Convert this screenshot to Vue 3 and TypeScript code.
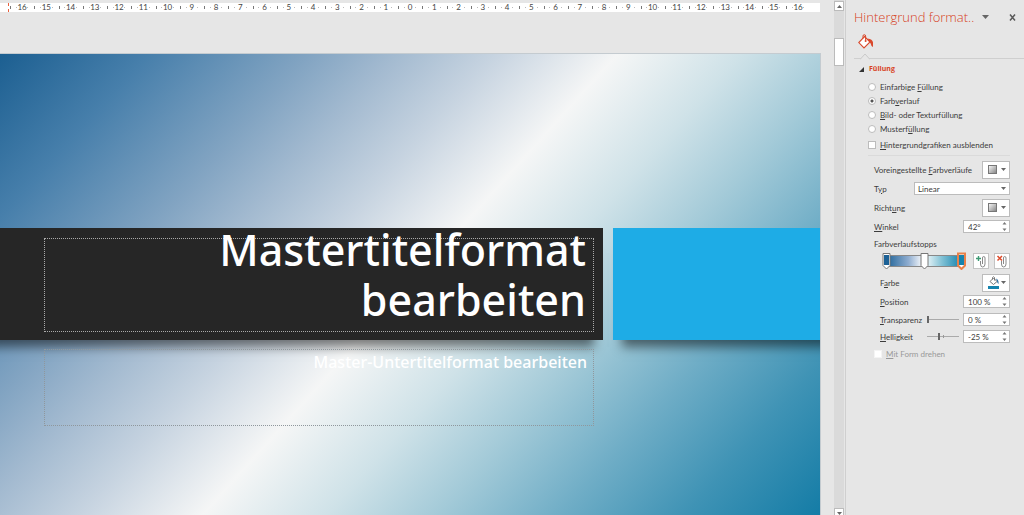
<script setup lang="ts">
import { ref } from 'vue'

interface FillOption {
  id: string
  before: string
  key: string
  after: string
}

interface GradientStop {
  position: number
  color: string
}

const rulerMarks: number[] = Array.from({ length: 33 }, (_, i) => Math.abs(i - 16))

const fillOptions: FillOption[] = [
  { id: 'solid', before: 'Einfarbige ', key: 'F', after: 'üllung' },
  { id: 'gradient', before: 'Farb', key: 'v', after: 'erlauf' },
  { id: 'picture', before: '', key: 'B', after: 'ild- oder Texturfüllung' },
  { id: 'pattern', before: 'Musterf', key: 'ü', after: 'llung' },
]

const stops: GradientStop[] = [
  { position: 0, color: '#1c6196' },
  { position: 50, color: '#ffffff' },
  { position: 100, color: '#1583ae' },
]

const fill = ref('gradient')
const activeStop = ref(2)
const hideGraphics = ref(false)
const angle = ref('42°')
const position = ref('100 %')
const transparency = ref(0)
const brightness = ref(-25)
</script>

<template>
  <div class="app">
    <main class="work">
      <div class="ruler">
        <span v-for="(mark, i) in rulerMarks" :key="i" class="mark">{{ mark }}</span>
        <i class="cursor"></i>
      </div>

      <section class="slide">
        <div class="band">
          <div class="title-block">
            <h1 class="title">Mastertitelformat bearbeiten</h1>
          </div>
          <div class="accent-block"></div>
        </div>
        <div class="band">
          <p class="subtitle">Master-Untertitelformat bearbeiten</p>
          <div class="spacer"></div>
        </div>
      </section>
    </main>

    <div class="scrollbar">
      <button class="scroll-btn" aria-label="Nach oben">
        <svg width="5" height="3" viewBox="0 0 5 3"><path d="M0 3 2.500 0 5 3Z" fill="#666" /></svg>
      </button>
      <div class="thumb"></div>
      <button class="scroll-btn" aria-label="Nach unten">
        <svg width="5" height="3" viewBox="0 0 5 3"><path d="M0 0H5L2.500 3Z" fill="#666" /></svg>
      </button>
    </div>

    <aside class="panel">
      <header class="head">
        <h2>Hintergrund format..</h2>
        <button class="plain" aria-label="Optionen">
          <svg width="7" height="4" viewBox="0 0 7 4"><path d="M0 0H7L3.500 4Z" fill="#666" /></svg>
        </button>
        <button class="plain close" aria-label="Schließen">
          <svg width="7" height="7" viewBox="0 0 7 7"><path d="M1 0.500 6 6.500M6 0.500 1 6.500" stroke="#5a5a5a" stroke-width="1.500" /></svg>
        </button>
      </header>

      <div class="tabs">
        <button class="plain" aria-label="Füllung">
          <svg width="16" height="16" viewBox="0 0 16 16">
            <path d="M6.500 2.500 12 8 6 14 0.800 8.600Z" fill="#fff" stroke="#d9482b" stroke-width="1.100" />
            <path d="M5 4.500V2Q5 0.700 6.300 0.700T7.600 2V6.500" fill="none" stroke="#d9482b" />
            <circle cx="7.600" cy="7" r="1" fill="#d9482b" />
            <path d="M9.500 4.500Q14.500 5 15 8.500V13Q13 12 12.600 9.500Z" fill="#d9482b" />
          </svg>
        </button>
      </div>
      <div class="tab-line">
        <svg width="10" height="7" viewBox="0 0 10 7"><path d="M0 6.500 5 1 10 6.500" fill="#e6e6e6" stroke="#c9c9c9" /></svg>
      </div>

      <h3 class="section">
        <svg width="5" height="5" viewBox="0 0 5 5"><path d="M5 0V5H0Z" fill="#333" /></svg>
        Füllung
      </h3>

      <label v-for="option in fillOptions" :key="option.id" class="choice">
        <input v-model="fill" type="radio" name="fill" :value="option.id" />
        <span>{{ option.before }}<u>{{ option.key }}</u>{{ option.after }}</span>
      </label>
      <label class="choice tall">
        <input v-model="hideGraphics" type="checkbox" />
        <span><u>H</u>intergrundgrafiken ausblenden</span>
      </label>

      <div class="props">
        <div class="row">
          <span>Voreingestellte <u>F</u>arbverläufe</span>
          <button class="picker" aria-label="Voreingestellte Farbverläufe">
            <i class="swatch"></i>
            <svg width="5" height="3" viewBox="0 0 5 3"><path d="M0 0H5L2.500 3Z" fill="#666" /></svg>
          </button>
        </div>
        <div class="row">
          <label for="type">T<u>y</u>p</label>
          <div class="select">
            <select id="type"><option>Linear</option></select>
            <svg width="5" height="3" viewBox="0 0 5 3"><path d="M0 0H5L2.500 3Z" fill="#666" /></svg>
          </div>
        </div>
        <div class="row">
          <span>Richt<u>u</u>ng</span>
          <button class="picker" aria-label="Richtung">
            <i class="swatch"></i>
            <svg width="5" height="3" viewBox="0 0 5 3"><path d="M0 0H5L2.500 3Z" fill="#666" /></svg>
          </button>
        </div>
        <div class="row">
          <label for="angle"><u>W</u>inkel</label>
          <div class="spin">
            <input id="angle" v-model="angle" type="text" />
            <svg width="5" height="9" viewBox="0 0 5 9"><path d="M0.500 2.500 2.500 0 4.500 2.500ZM0.500 6.500H4.500L2.500 9Z" fill="#777" /></svg>
          </div>
        </div>

        <div class="caption">Farbverlaufstopps</div>
        <div class="stops-row">
          <div class="stops">
            <button
              v-for="(stop, i) in stops"
              :key="i"
              class="stop"
              :style="{ left: stop.position + '%' }"
              :aria-label="'Stopp ' + (i + 1)"
              @click="activeStop = i"
            >
              <svg width="11" height="18" viewBox="0 0 11 18">
                <path
                  d="M2 1.500H9V13.500L5.500 17 2 13.500Z"
                  fill="#fff"
                  :stroke="activeStop === i ? '#e8814a' : '#777'"
                  :stroke-width="activeStop === i ? 2 : 1"
                />
                <path d="M3 3H8V13H3Z" :fill="stop.color" />
              </svg>
            </button>
          </div>
          <button class="tool" aria-label="Stopp hinzufügen">
            <svg width="13" height="13" viewBox="0 0 13 13">
              <path d="M5.500 6V9Q5.500 12 7.700 12T10 9V3Q10 1.500 8.700 1.500T7.500 3V9" fill="none" stroke="#8a8a8a" />
              <path d="M1 3.500H6M3.500 1V6" stroke="#3d9b74" stroke-width="1.400" />
            </svg>
          </button>
          <button class="tool" aria-label="Stopp entfernen">
            <svg width="13" height="13" viewBox="0 0 13 13">
              <path d="M5.500 6V9Q5.500 12 7.700 12T10 9V3Q10 1.500 8.700 1.500T7.500 3V9" fill="none" stroke="#8a8a8a" />
              <path d="M1.500 1 6 5.500M6 1 1.500 5.500" stroke="#dd4b2c" stroke-width="1.500" />
            </svg>
          </button>
        </div>

        <div class="row sub">
          <span>F<u>a</u>rbe</span>
          <button class="picker" aria-label="Farbe">
            <svg width="12" height="13" viewBox="0 0 12 13">
              <path d="M5.500 2 9 5.500 5.500 8.500 2 5.500Z" fill="#fff" stroke="#777" />
              <path d="M4.500 3.500V1.500Q5.500 0 6.500 1.500V4.500" fill="none" stroke="#777" />
              <path d="M8 2.500Q11 3.500 10.500 8 9 7 9 5Z" fill="#2b6ea5" />
              <rect y="10" width="11" height="3" fill="#1583ae" />
            </svg>
            <svg width="5" height="3" viewBox="0 0 5 3"><path d="M0 0H5L2.500 3Z" fill="#666" /></svg>
          </button>
        </div>
        <div class="row sub">
          <label for="position"><u>P</u>osition</label>
          <div class="spin">
            <input id="position" v-model="position" type="text" />
            <svg width="5" height="9" viewBox="0 0 5 9"><path d="M0.500 2.500 2.500 0 4.500 2.500ZM0.500 6.500H4.500L2.500 9Z" fill="#777" /></svg>
          </div>
        </div>
        <div class="row sub short">
          <label for="transparency"><u>T</u>ransparenz</label>
          <input v-model.number="transparency" class="slider" type="range" min="0" max="100" aria-label="Transparenz" />
          <div class="spin">
            <input id="transparency" type="text" :value="transparency + ' %'" />
            <svg width="5" height="9" viewBox="0 0 5 9"><path d="M0.500 2.500 2.500 0 4.500 2.500ZM0.500 6.500H4.500L2.500 9Z" fill="#777" /></svg>
          </div>
        </div>
        <div class="row sub short">
          <label for="brightness"><u>H</u>elligkeit</label>
          <input v-model.number="brightness" class="slider centered" type="range" min="-100" max="100" aria-label="Helligkeit" />
          <div class="spin">
            <input id="brightness" type="text" :value="brightness + ' %'" />
            <svg width="5" height="9" viewBox="0 0 5 9"><path d="M0.500 2.500 2.500 0 4.500 2.500ZM0.500 6.500H4.500L2.500 9Z" fill="#777" /></svg>
          </div>
        </div>
        <label class="choice disabled">
          <input type="checkbox" disabled />
          <span><u>M</u>it Form drehen</span>
        </label>
      </div>
    </aside>
  </div>
</template>

<style>
body {
  margin: 0;
  background: #e6e6e6;
}
</style>

<style scoped>
* {
  box-sizing: border-box;
}
.app {
  display: flex;
  height: 100vh;
  overflow: hidden;
  background: #e6e6e6;
  color: #3c3c3c;
  font: 8px/12px Lato, 'Open Sans', sans-serif;
}
button,
input,
select {
  font: inherit;
  color: inherit;
  margin: 0;
  padding: 0;
}
svg {
  display: block;
  flex: none;
}
.work {
  flex: 1;
  min-width: 0;
  display: flex;
  flex-direction: column;
  padding: 3px 13px 0 0;
}
.ruler {
  position: relative;
  display: flex;
  height: 9px;
  margin: 0 1px 41px 0;
  padding: 0 10px;
  background: #fff;
  color: #444;
  font: 8px/9px Lato, 'Open Sans', sans-serif;
}
.mark {
  flex: 1;
  text-align: center;
  background:
    linear-gradient(#777, #777) 0 3px / 1px 3px no-repeat,
    linear-gradient(#bbb, #bbb) 25% 4px / 1px 1px no-repeat,
    linear-gradient(#bbb, #bbb) 75% 4px / 1px 1px no-repeat;
}
.cursor {
  position: absolute;
  left: 8px;
  top: 0;
  height: 9px;
  border-left: 1px dashed #e8603c;
}
.slide {
  flex: 1;
  overflow: hidden;
  padding-top: 174px;
  border: solid #c4cbd0;
  border-width: 1px 1px 0 0;
  background: linear-gradient(132deg, #1c5f91 0%, #477fab 12%, #82a4c2 25%, #a3bad0 32%, #c6d3e0 40%, #f5f6f6 50%, #cfe2e8 60%, #a3cad8 69%, #6fadc6 79%, #3f93b5 89%, #147ca6 100%);
  color: #fff;
  font-family: 'Noto Sans', 'Open Sans', sans-serif;
}
.band {
  display: grid;
  grid-template-columns: 603fr 207fr;
  gap: 10px;
}
.title-block {
  height: 112px;
  margin-left: -20px;
  padding: 10px 9px 8px 64px;
  background: #262626;
  box-shadow: 0 16px 10px -9px rgba(0, 0, 0, 0.5);
}
.accent-block {
  margin-right: -20px;
  background: #1eace6;
  box-shadow: 0 16px 10px -9px rgba(0, 0, 0, 0.5);
}
.title {
  display: flex;
  align-items: flex-end;
  height: 94px;
  margin: 0;
  padding: 0 7px 6px 120px;
  border: 1px dotted #aaa;
  font-size: 43px;
  font-weight: 500;
  line-height: 50px;
  text-align: right;
}
.subtitle {
  height: 77px;
  margin: 9px 9px 0 44px;
  padding: 1px 6px 0;
  border: 1px dotted #8f979c;
  font-size: 16px;
  font-weight: 500;
  line-height: 22px;
  text-align: right;
}
.scrollbar {
  flex: none;
  display: flex;
  flex-direction: column;
  width: 11px;
  height: 518px;
  padding-top: 1px;
  background: #dadada;
  border-right: 1px solid #e6e6e6;
}
.scroll-btn {
  display: grid;
  place-items: center;
  height: 10px;
  background: #fff;
  border: 1px solid #bbb;
}
.scroll-btn:last-child {
  margin-top: auto;
}
.thumb {
  height: 28px;
  margin-top: 27px;
  background: #fff;
  border: 1px solid #bbb;
}
.panel {
  flex: none;
  width: 179px;
  padding: 0 14px 0 22px;
  border-left: 1px solid #cfcfcf;
}
.plain {
  border: 0;
  background: none;
}
.head {
  display: flex;
  align-items: center;
  height: 34px;
  margin: 0 -10px 0 -14px;
}
.head .plain {
  height: 10px;
}
.head h2 {
  margin: 0;
  color: #d63f1c;
  font: 300 13px/18px 'Open Sans', sans-serif;
  white-space: nowrap;
  flex: 1;
}
.head .close {
  margin: 0 4px 0 20px;
}
.tabs {
  display: flex;
  height: 19px;
  margin-left: -10px;
}
.tabs .plain {
  height: 14px;
}
.tab-line {
  height: 6px;
  margin: 0 -14px;
  padding-left: 6px;
  border-bottom: 1px solid #cfcfcf;
}
.section {
  display: flex;
  align-items: center;
  gap: 5px;
  height: 20px;
  margin: 0 0 1px -9px;
  color: #d8431f;
  font: 700 7px/12px 'Open Sans', sans-serif;
}
.choice {
  display: flex;
  align-items: center;
  gap: 4px;
  height: 14px;
  white-space: nowrap;
}
.choice.tall {
  height: 18px;
}
.choice input {
  appearance: none;
  flex: none;
  width: 8px;
  height: 8px;
  background: #fff;
  border: 1px solid #bcbcbc;
}
.choice input[type='radio'] {
  border-radius: 50%;
}
.choice input[type='radio']:checked {
  background: radial-gradient(circle, #555 0 1px, #fff 2px);
}
.props {
  margin-top: 1px;
  padding: 4px 0 0 6px;
  border-top: 1px solid #dadada;
}
.row {
  display: flex;
  align-items: center;
  justify-content: space-between;
  height: 19px;
  white-space: nowrap;
}
.row.sub {
  padding-left: 6px;
}
.row.short {
  height: 17px;
}
.picker {
  display: flex;
  align-items: center;
  justify-content: space-between;
  width: 28px;
  height: 18px;
  padding: 0 3px 0 5px;
  background: #fff;
  border: 1px solid #bcbcbc;
}
.swatch {
  width: 9px;
  height: 9px;
  border: 1px solid #777;
  background: linear-gradient(135deg, #f4f4f4, #888);
}
.select {
  display: flex;
  align-items: center;
  width: 96px;
  height: 13px;
  padding: 0 3px;
  background: #fff;
  border: 1px solid #bcbcbc;
}
.select select {
  appearance: none;
  flex: 1;
  height: 11px;
  border: 0;
  background: none;
}
.spin {
  display: flex;
  align-items: center;
  width: 47px;
  height: 13px;
  padding: 0 2px 0 4px;
  background: #fff;
  border: 1px solid #bcbcbc;
}
.spin input {
  flex: 1;
  min-width: 0;
  width: 0;
  height: 11px;
  border: 0;
  background: none;
}
.caption {
  height: 15px;
  line-height: 16px;
}
.stops-row {
  display: flex;
  align-items: center;
  gap: 5px;
  height: 20px;
  margin-bottom: 2px;
}
.stops {
  position: relative;
  flex: 1;
  height: 12px;
  margin: 0 6px 0 11px;
  border: 1px solid #888;
  background: linear-gradient(90deg, #1c6196, #8fadd0 30%, #fff 50%, #7fc0d4 75%, #1583ae);
}
.stop {
  position: absolute;
  top: -4px;
  width: 11px;
  height: 18px;
  margin-left: -5px;
  border: 0;
  background: none;
}
.tool {
  display: grid;
  place-items: center;
  width: 16px;
  height: 16px;
  background: #fff;
  border: 1px solid #c4c4c4;
}
.slider {
  appearance: none;
  width: 32px;
  height: 9px;
  margin: 0 4px 0 auto;
  background: linear-gradient(#aaa, #aaa) 0 4px / 100% 1px no-repeat;
}
.slider.centered {
  background:
    linear-gradient(#999, #999) 50% 50% / 1px 3px no-repeat,
    linear-gradient(#aaa, #aaa) 0 4px / 100% 1px no-repeat;
}
.slider::-webkit-slider-thumb {
  appearance: none;
  width: 2px;
  height: 7px;
  background: #666;
}
.disabled {
  height: 17px;
  color: #999;
}
.disabled input {
  border-color: #f4f4f4;
}
</style>
